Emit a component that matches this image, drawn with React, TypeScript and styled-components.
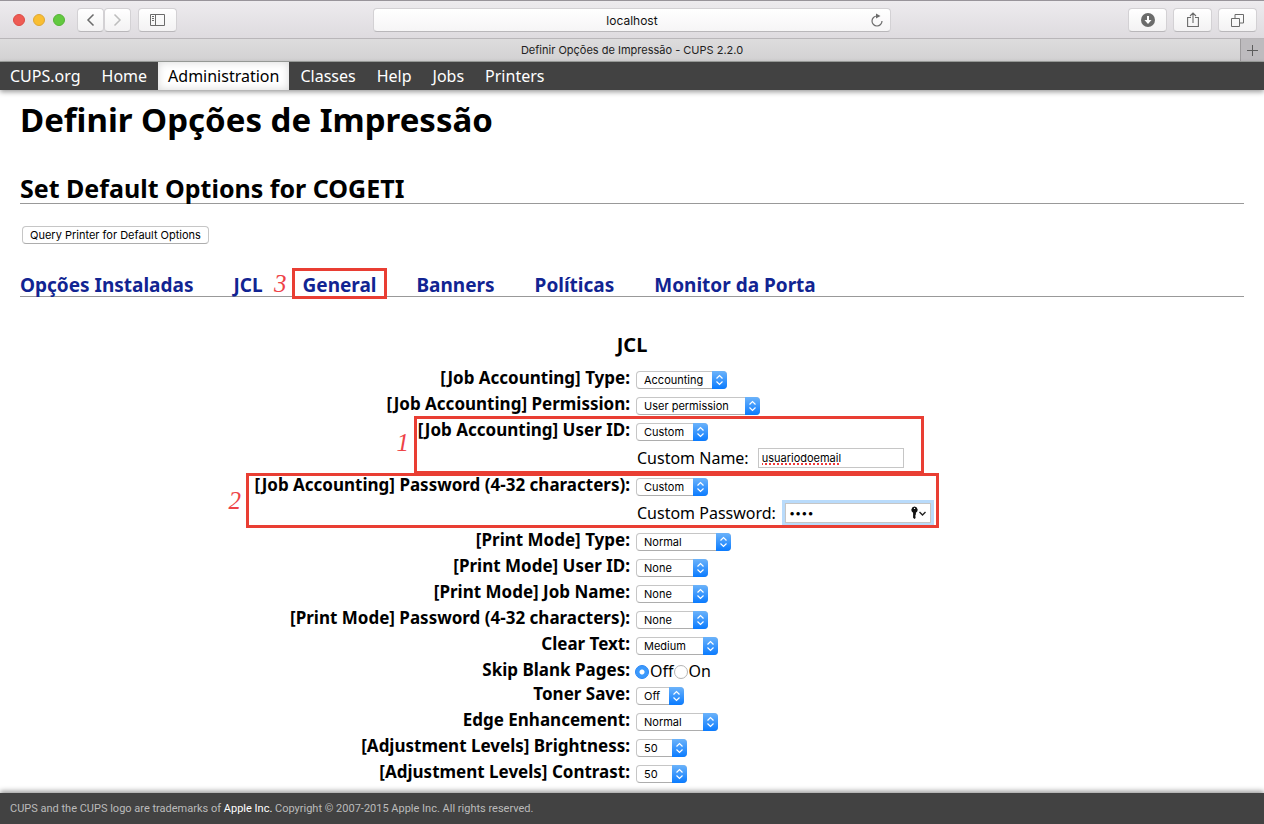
import React from "react";
import styled, { createGlobalStyle, css } from "styled-components";

const textFont = `"Noto Sans", "Open Sans", sans-serif`;
const uiFont = `Inter, "Liberation Sans", sans-serif`;
const markRed = "#e93e33";

const GlobalStyle = createGlobalStyle`
  *, *::before, *::after { box-sizing: border-box; }
  body { margin: 0; background: #fff; color: #000; font: 16px/24px ${textFont}; }
  button, input, select { font-family: ${uiFont}; }
`;

const Page = styled.div`
  display: flex;
  flex-direction: column;
  min-height: 100vh;
`;

/* ---------- Browser window ---------- */

const Toolbar = styled.header`
  display: grid;
  grid-template-columns: 1fr minmax(0, 518px) 1fr;
  align-items: center;
  height: 39px;
  padding: 1px 7px 0;
  background: linear-gradient(#edebee, #dedbdf);
  border-top: 1px solid #98949a;
  border-bottom: 1px solid #b9b6b9;
`;

const ToolGroup = styled.div<{ $end?: boolean }>`
  display: flex;
  align-items: center;
  gap: 6px;
  ${(p) => p.$end && css`justify-content: flex-end;`}
`;

const Lights = styled.div`
  display: flex;
  gap: 8px;
  margin: 0 6px;
`;

const Light = styled.button<{ $color: string; $edge: string }>`
  width: 12px;
  height: 12px;
  padding: 0;
  border: 1px solid ${(p) => p.$edge};
  border-radius: 50%;
  background: ${(p) => p.$color};
`;

const Pair = styled.div`
  display: flex;
  margin-right: 1px;
`;

const ToolButton = styled.button<{ $narrow?: boolean }>`
  display: flex;
  align-items: center;
  justify-content: center;
  width: ${(p) => (p.$narrow ? 27 : 39)}px;
  height: 24px;
  padding: 0;
  border: 1px solid #d3d1d4;
  border-bottom-color: #b9b7ba;
  border-radius: 4px;
  background: linear-gradient(#fff, #f3f2f3);
`;

const AddressBar = styled.form`
  display: grid;
  grid-template-columns: 24px 1fr 24px;
  align-items: center;
  height: 24px;
  border: 1px solid #d3d1d4;
  border-bottom-color: #b9b7ba;
  border-radius: 4px;
  background: linear-gradient(#fff, #f6f5f6);
`;

const AddressInput = styled.input`
  grid-column: 2;
  min-width: 0;
  border: 0;
  padding: 0;
  background: none;
  font-size: 12px;
  text-align: center;
  color: #111;
`;

const ReloadButton = styled.button`
  display: flex;
  padding: 0 4px;
  border: 0;
  background: none;
`;

const TabStrip = styled.div`
  display: grid;
  grid-template-columns: 1fr 24px;
  height: 23px;
  background: linear-gradient(#dddcdd, #d2d1d2);
  border-bottom: 1px solid #a0a3a0;
`;

const WindowTab = styled.div`
  padding-left: 24px;
  font: 11px/22px ${uiFont};
  text-align: center;
  color: #222;
`;

const NewTab = styled.button`
  display: flex;
  align-items: center;
  justify-content: center;
  padding: 0;
  border: 0;
  border-left: 1px solid #9d9b9d;
  background: #bdbbbe;
`;

/* ---------- Page ---------- */

const Nav = styled.nav`
  display: flex;
  gap: 1px;
  height: 28px;
  background: #424242;
  box-shadow: 0 2px 5px rgba(0, 0, 0, 0.4);
`;

const NavLink = styled.a<{ $active?: boolean }>`
  padding: 0 10px;
  line-height: 28px;
  text-decoration: none;
  color: ${(p) => (p.$active ? "#000" : "#fff")};
  ${(p) => p.$active && css`
    background: #fff;
    box-shadow: inset 0 0 8px rgba(0, 0, 0, 0.16);
  `}
`;

const Main = styled.main`
  flex: 1;
  padding: 8px 20px 6px;
`;

const Title = styled.h1`
  margin: 0;
  font-size: 33px;
  line-height: 44px;
`;

const Subtitle = styled.h2`
  margin: 32px 0 0;
  border-bottom: 1px solid #999;
  font-size: 25px;
  line-height: 29px;
`;

const QueryButton = styled.button`
  display: block;
  height: 18px;
  margin: 22px 2px 0;
  padding: 0 7px;
  border: 1px solid #c6c6c6;
  border-bottom-color: #adadad;
  border-radius: 4px;
  background: #fff;
  font-size: 11px;
  line-height: 16px;
  color: #000;
`;

const Sections = styled.nav`
  display: flex;
  gap: 40px;
  height: 26px;
  margin-top: 27px;
  border-bottom: 1px solid #999;
`;

const SectionLink = styled.a`
  position: relative;
  font-size: 19px;
  font-weight: bold;
  line-height: 28px;
  color: #112492;
  text-decoration: none;
  white-space: nowrap;
`;

const GroupTitle = styled.h3`
  margin: 34px 0 8px;
  font-size: 20px;
  line-height: 28px;
  text-align: center;
`;

const Options = styled.table`
  width: 100%;
  border-collapse: collapse;
`;

const OptionRow = styled.tr`
  position: relative;
`;

const OptionLabel = styled.th`
  width: 50%;
  padding: 0 2px 0 0;
  text-align: right;
  vertical-align: top;
  font-size: 17px;
  line-height: 22px;
`;

const OptionValue = styled.td`
  padding: 0 0 0 4px;
  vertical-align: top;
`;

const Field = styled.div`
  display: flex;
  align-items: center;
  height: 26px;
`;

const Radios = styled.div`
  display: flex;
  align-items: center;
  height: 24px;
  margin-left: -1px;
`;

const RadioLabel = styled.label`
  display: flex;
  align-items: center;
  gap: 1px;
  line-height: 22px;
`;

const Radio = styled.input`
  appearance: none;
  width: 14px;
  height: 14px;
  margin: 2px 0 0;
  border: 1px solid #b4b4b4;
  border-radius: 50%;
  background: #fff;
  &:checked {
    border-color: #2b87f5;
    background: radial-gradient(circle, #fff 0 2px, #3b99fc 3px);
  }
`;

const CustomField = styled.label`
  display: flex;
  align-items: center;
  gap: 9px;
  height: 29px;
  padding: 0 0 3px 1px;
`;

const InputWrap = styled.span`
  position: relative;
  display: flex;
`;

const TextInput = styled.input<{ $focused?: boolean; $misspelt?: boolean }>`
  width: 146px;
  height: 20px;
  padding: 1px 3px;
  border: 1px solid #c6c6c6;
  outline: 0;
  font-size: 11px;
  color: #000;
  ${(p) => p.$focused && css`box-shadow: 0 0 0 3px #b9dbfb;`}
  ${(p) => p.$misspelt && css`text-decoration: underline dotted #f03a3a 2px;`}
`;

const KeyIcon = styled.svg`
  position: absolute;
  right: 3px;
  top: 3px;
`;

const SelectWrap = styled.span<{ $width: number }>`
  position: relative;
  display: flex;
  width: ${(p) => p.$width}px;
  height: 18px;
`;

const SelectBox = styled.select`
  appearance: none;
  width: 100%;
  padding: 0 16px 0 7px;
  border: 1px solid #c6c6c6;
  border-bottom-color: #adadad;
  border-radius: 4px;
  background: #fff;
  font-size: 11px;
  line-height: 16px;
  color: #000;
`;

const Stepper = styled.span`
  position: absolute;
  right: 0;
  top: 0;
  display: flex;
  align-items: center;
  justify-content: center;
  width: 15px;
  height: 18px;
  border-radius: 0 4px 4px 0;
  background: linear-gradient(#6cb3fa, #0a7bff);
  pointer-events: none;
`;

/* Red call-outs that lie over the page */
const MarkBox = styled.span<{ $left: string; $top: number; $width: number; $height: number }>`
  position: absolute;
  z-index: 1;
  left: ${(p) => p.$left};
  top: ${(p) => p.$top}px;
  width: ${(p) => p.$width}px;
  height: ${(p) => p.$height}px;
  border: 3px solid ${markRed};
  pointer-events: none;
`;

const MarkNumber = styled.span<{ $top: number }>`
  position: absolute;
  right: 100%;
  top: ${(p) => p.$top}px;
  margin-right: 8px;
  font: italic 25px/28px "Liberation Serif", serif;
  color: #ee4347;
`;

const Footer = styled.footer`
  padding: 0 10px;
  background: #424242;
  box-shadow: 0 -2px 5px rgba(0, 0, 0, 0.4);
  font-family: Roboto, ${textFont};
  font-size: 11px;
  line-height: 31px;
  color: #bbb;
`;

const FooterLink = styled.a`
  color: #fff;
  text-decoration: none;
`;

/* ---------- Data ---------- */

type Mark = { n: number; left: string; top: number; width: number; height: number; numberTop: number };

type Option = {
  id: string;
  label: string;
  value?: string;
  width?: number;
  radios?: string[];
  custom?: { label: string; value: string; secret?: boolean };
  mark?: Mark;
};

const options: Option[] = [
  { id: "acc-type", label: "[Job Accounting] Type:", value: "Accounting", width: 91 },
  { id: "acc-perm", label: "[Job Accounting] Permission:", value: "User permission", width: 124 },
  {
    id: "acc-user", label: "[Job Accounting] User ID:", value: "Custom", width: 72,
    custom: { label: "Custom Name:", value: "usuariodoemail" },
    mark: { n: 1, left: "calc(50% - 218px)", top: -3, width: 510, height: 58, numberTop: 10 },
  },
  {
    id: "acc-pass", label: "[Job Accounting] Password (4-32 characters):", value: "Custom", width: 72,
    custom: { label: "Custom Password:", value: "1234", secret: true },
    mark: { n: 2, left: "calc(50% - 386px)", top: -1, width: 693, height: 55, numberTop: 11 },
  },
  { id: "mode-type", label: "[Print Mode] Type:", value: "Normal", width: 95 },
  { id: "mode-user", label: "[Print Mode] User ID:", value: "None", width: 72 },
  { id: "mode-job", label: "[Print Mode] Job Name:", value: "None", width: 72 },
  { id: "mode-pass", label: "[Print Mode] Password (4-32 characters):", value: "None", width: 72 },
  { id: "clear", label: "Clear Text:", value: "Medium", width: 82 },
  { id: "skip", label: "Skip Blank Pages:", radios: ["Off", "On"] },
  { id: "toner", label: "Toner Save:", value: "Off", width: 48 },
  { id: "edge", label: "Edge Enhancement:", value: "Normal", width: 82 },
  { id: "bright", label: "[Adjustment Levels] Brightness:", value: "50", width: 51 },
  { id: "contrast", label: "[Adjustment Levels] Contrast:", value: "50", width: 51 },
];

const navItems = ["CUPS.org", "Home", "Administration", "Classes", "Help", "Jobs", "Printers"];
const sections = ["Opções Instaladas", "JCL", "General", "Banners", "Políticas", "Monitor da Porta"];

/* ---------- Parts ---------- */

function Callout({ mark }: { mark: Mark }) {
  return (
    <MarkBox $left={mark.left} $top={mark.top} $width={mark.width} $height={mark.height}>
      <MarkNumber $top={mark.numberTop}>{mark.n}</MarkNumber>
    </MarkBox>
  );
}

function Select({ id, value, width }: { id: string; value: string; width: number }) {
  return (
    <SelectWrap $width={width}>
      <SelectBox id={id} defaultValue={value}>
        <option>{value}</option>
      </SelectBox>
      <Stepper>
        <svg width="9" height="12" viewBox="0 0 9 12" fill="none" stroke="#fff" strokeWidth="1.2">
          <path d="M1.500 4.500 4.500 1.500 7.500 4.500M1.500 7.500 4.500 10.500 7.500 7.500" />
        </svg>
      </Stepper>
    </SelectWrap>
  );
}

function OptionLine({ option }: { option: Option }) {
  const { id, label, value, width, radios, custom, mark } = option;
  return (
    <OptionRow>
      <OptionLabel scope="row">
        {radios ? <span id={id}>{label}</span> : <label htmlFor={id}>{label}</label>}
        {mark && <Callout mark={mark} />}
      </OptionLabel>
      <OptionValue>
        {radios && (
          <Radios role="radiogroup" aria-labelledby={id}>
            {radios.map((r, i) => (
              <RadioLabel key={r}>
                <Radio type="radio" name={id} defaultChecked={i === 0} />
                {r}
              </RadioLabel>
            ))}
          </Radios>
        )}
        {value && width && (
          <Field>
            <Select id={id} value={value} width={width} />
          </Field>
        )}
        {custom && (
          <CustomField>
            {custom.label}
            <InputWrap>
              <TextInput
                type={custom.secret ? "password" : "text"}
                defaultValue={custom.value}
                spellCheck={false}
                $focused={custom.secret}
                $misspelt={!custom.secret}
              />
              {custom.secret && (
                <KeyIcon width="18" height="14" viewBox="0 0 18 14">
                  <path d="M4.500.6a3.300 3.300 0 0 0-1.400 6.200v4.900l1.400 1.400 1.400-1.300-.9-.9.9-.9-.8-.8.800-.8V6.800A3.300 3.300 0 0 0 4.500.6z" fill="#111" />
                  <circle cx="4.500" cy="2.400" r=".7" fill="#fff" />
                  <path d="m9.500 6 3 3 3-3" fill="none" stroke="#222" strokeWidth="1.400" />
                </KeyIcon>
              )}
            </InputWrap>
          </CustomField>
        )}
      </OptionValue>
    </OptionRow>
  );
}

function BrowserBar() {
  return (
    <>
      <Toolbar>
        <ToolGroup>
          <Lights>
            <Light aria-label="Close" $color="#ee5b54" $edge="#dc4b45" />
            <Light aria-label="Minimize" $color="#f9be32" $edge="#dea734" />
            <Light aria-label="Zoom" $color="#62c93f" $edge="#55b337" />
          </Lights>
          <Pair>
            <ToolButton aria-label="Back" $narrow>
              <svg width="9" height="14" fill="none" stroke="#6b6b6b" strokeWidth="1.500"><path d="M7.500 1.500 2 7l5.500 5.500" /></svg>
            </ToolButton>
            <ToolButton aria-label="Forward" $narrow>
              <svg width="9" height="14" fill="none" stroke="#bdbdbd" strokeWidth="1.500"><path d="M1.500 1.500 7 7l-5.500 5.500" /></svg>
            </ToolButton>
          </Pair>
          <ToolButton aria-label="Sidebar">
            <svg width="15" height="12" fill="none" stroke="#6b6b6b">
              <path d="M.5.5h14v11H.5zM5.500.5v11M2 2.500h2M2 4.500h2M2 6.500h2" />
            </svg>
          </ToolButton>
        </ToolGroup>
        <AddressBar>
          <AddressInput aria-label="Address" defaultValue="localhost" />
          <ReloadButton type="button" aria-label="Reload">
            <svg width="14" height="16" viewBox="0 0 14 16" fill="none" stroke="#6b6b6b" strokeWidth="1.200">
              <path d="M7 4A5 5 0 1 0 12 9" />
              <path d="M6 1.500 10.500 4 6 6.500z" fill="#6b6b6b" stroke="none" />
            </svg>
          </ReloadButton>
        </AddressBar>
        <ToolGroup $end>
          <ToolButton aria-label="Downloads">
            <svg width="14" height="14">
              <circle cx="7" cy="7" r="7" fill="#6b6b6b" />
              <path d="M6 3h2v4h2.500L7 11 3.500 7H6z" fill="#fff" />
            </svg>
          </ToolButton>
          <ToolButton aria-label="Share">
            <svg width="12" height="16" fill="none" stroke="#6b6b6b" strokeWidth="1.100">
              <path d="M4 5.500H.6v9h10.800v-9H8M6 11V1.200M3 4l3-3 3 3" />
            </svg>
          </ToolButton>
          <ToolButton aria-label="Show all tabs">
            <svg width="13" height="13" fill="none" stroke="#6b6b6b">
              <path d="M.5 4.500h8v8h-8zM4 4V.5h8.500V9H9" />
            </svg>
          </ToolButton>
        </ToolGroup>
      </Toolbar>
      <TabStrip>
        <WindowTab>Definir Opções de Impressão - CUPS 2.2.0</WindowTab>
        <NewTab aria-label="New tab">
          <svg width="11" height="11" stroke="#5c5c5c"><path d="M0 5.500h11M5.500 0v11" /></svg>
        </NewTab>
      </TabStrip>
    </>
  );
}

export default function App() {
  return (
    <Page>
      <GlobalStyle />
      <BrowserBar />
      <Nav>
        {navItems.map((item) => (
          <NavLink key={item} href="#" $active={item === "Administration"}>{item}</NavLink>
        ))}
      </Nav>
      <Main>
        <Title>Definir Opções de Impressão</Title>
        <Subtitle>Set Default Options for COGETI</Subtitle>
        <QueryButton>Query Printer for Default Options</QueryButton>
        <Sections>
          {sections.map((s) => (
            <SectionLink key={s} href="#">
              {s}
              {s === "General" && (
                <Callout mark={{ n: 3, left: "-11px", top: -3, width: 95, height: 31, numberTop: -1 }} />
              )}
            </SectionLink>
          ))}
        </Sections>
        <GroupTitle>JCL</GroupTitle>
        <Options>
          <tbody>
            {options.map((o) => <OptionLine key={o.id} option={o} />)}
          </tbody>
        </Options>
      </Main>
      <Footer>
        CUPS and the CUPS logo are trademarks of <FooterLink href="#">Apple Inc.</FooterLink> Copyright © 2007-2015 Apple Inc. All rights reserved.
      </Footer>
    </Page>
  );
}
